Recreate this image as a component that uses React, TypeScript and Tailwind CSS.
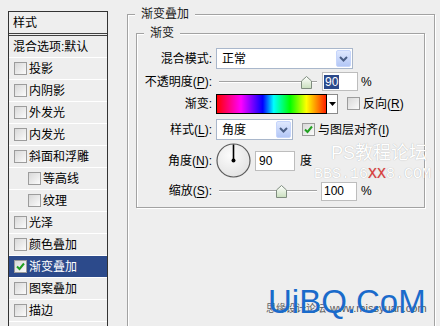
import type { ReactNode } from 'react'

// Photoshop "图层样式" dialog, 渐变叠加 page, Windows XP look.

type StyleRowT = { label: string; sub?: boolean; on?: boolean }

const STYLE_ROWS: StyleRowT[] = [
  { label: '投影' },
  { label: '内阴影' },
  { label: '外发光' },
  { label: '内发光' },
  { label: '斜面和浮雕' },
  { label: '等高线', sub: true },
  { label: '纹理', sub: true },
  { label: '光泽' },
  { label: '颜色叠加' },
  { label: '渐变叠加', on: true },
  { label: '图案叠加' },
  { label: '描边' },
]

function Checkbox({ on = false }: { on?: boolean }) {
  return (
    <span className="flex h-[13px] w-[13px] shrink-0 items-center justify-center border border-[#9c9c9c] bg-linear-to-br from-[#d8d8d8] to-[#fbfbfb]">
      {on && (
        <svg width="11" height="11" viewBox="0 0 11 11">
          <path d="M2 5.5 L4.5 8 L9 2.5" fill="none" stroke="#22a022" strokeWidth="2" />
        </svg>
      )}
    </span>
  )
}

function StyleList() {
  return (
    <div className="mt-[11px] ml-[8px] h-[330px] w-[100px] shrink-0 border border-[#333]">
      <div className="flex h-[24px] items-center border-b-[3px] border-double border-[#404040] pl-[4px]">样式</div>
      <div className="flex h-[22px] items-center border-b border-white pl-[4px]">混合选项:默认</div>
      {STYLE_ROWS.map((row) => (
        <div
          key={row.label}
          className={
            'flex h-[22px] items-center gap-[2px] border-b border-white ' +
            (row.sub ? 'pl-[19px] ' : 'pl-[5px] ') +
            (row.on ? 'bg-[#2c4a8b] text-white' : '')
          }
        >
          <Checkbox on={row.on} />
          <span>{row.label}</span>
        </div>
      ))}
      <div className="h-[22px] border-b border-white" />
    </div>
  )
}

function Legend({ children }: { children: ReactNode }) {
  return (
    <span className="absolute top-[-9px] left-[7px] bg-[#eeeeee] px-[6px] leading-[16px] text-[#1a1a1a]">
      {children}
    </span>
  )
}

function Row({ label, className, children }: { label: ReactNode; className: string; children: ReactNode }) {
  return (
    <div className={'flex items-center ' + className}>
      <span className="w-[75px] shrink-0 text-right">{label}</span>
      <div className="ml-[4px] flex items-center">{children}</div>
    </div>
  )
}

function Key({ k }: { k: string }) {
  return (
    <>
      (<span className="underline underline-offset-2">{k}</span>):
    </>
  )
}

function DropButton() {
  return (
    <span className="mr-[1px] ml-auto flex h-[17px] w-[15px] items-center justify-center rounded-[2px] border border-[#c6d5fb] bg-linear-to-b from-[#dfe8fe] to-[#b3c7f6]">
      <svg width="9" height="6" viewBox="0 0 9 6">
        <path d="M1 1 L4.5 4.5 L8 1" fill="none" stroke="#4b5f86" strokeWidth="2" />
      </svg>
    </span>
  )
}

function Select({ value, className }: { value: string; className: string }) {
  return (
    <div className={'flex h-[21px] items-center border border-[#a9b7cb] bg-white pl-[5px] ' + className}>
      <span>{value}</span>
      <DropButton />
    </div>
  )
}

function Slider({ pct, id }: { pct: number; id: string }) {
  return (
    <div className="relative ml-[3px] h-[14px] w-[98px]">
      <div className="absolute inset-x-0 top-[6px] h-[2px] border-t border-[#a3a3a3] bg-white" />
      <svg className="absolute top-[1px]" style={{ left: `${pct * 97 - 5.5}px` }} width="11" height="13" viewBox="0 0 11 13">
        <defs>
          <linearGradient id={id} x1="0" y1="0" x2="0" y2="1">
            <stop offset="0" stopColor="#ffffff" />
            <stop offset="1" stopColor="#c9dfbd" />
          </linearGradient>
        </defs>
        <path d="M0.5 5 L5.5 0.5 L10.5 5 V12.5 H0.5 Z" fill={`url(#${id})`} stroke="#7f8c7f" />
      </svg>
    </div>
  )
}

function Field({ className, children }: { className: string; children: ReactNode }) {
  return (
    <div className={'flex h-[19px] items-center border border-[#bdbdbd] bg-white ' + className}>{children}</div>
  )
}

function Dial() {
  return (
    <svg width="35" height="35" viewBox="0 0 35 35">
      <defs>
        <radialGradient id="dialFill" cx="0.4" cy="0.35" r="0.75">
          <stop offset="0" stopColor="#fcfcfc" />
          <stop offset="1" stopColor="#e0e0e0" />
        </radialGradient>
      </defs>
      <circle cx="17.5" cy="17.5" r="16.5" fill="url(#dialFill)" stroke="#5c5c5c" strokeWidth="1.2" />
      <line x1="17.5" y1="17.5" x2="17.5" y2="1.5" stroke="#000" strokeWidth="1.6" />
      <circle cx="17.5" cy="17.5" r="2" fill="#000" />
    </svg>
  )
}

export default function App() {
  const opacity = 90
  const scale = 100

  return (
    <div className="relative flex h-[326px] w-[440px] overflow-hidden bg-[#eeeeee] font-['Liberation_Sans','Noto_Sans_CJK_SC',sans-serif] text-[12px] text-black">
      <StyleList />

      <div className="relative mt-[14px] ml-[19px] h-[330px] w-[308px] shrink-0 border border-[#a2a2a2] shadow-[inset_1px_1px_0_#fff,1px_1px_0_#fff]">
        <Legend>渐变叠加</Legend>

        <div className="relative mt-[18px] ml-[8px] h-[175px] w-[289px] border border-[#a2a2a2] shadow-[inset_1px_1px_0_#fff,1px_1px_0_#fff]">
          <Legend>渐变</Legend>

          <div className="flex flex-col pt-[14px]">
            <Row label="混合模式:" className="h-[21px]">
              <Select value="正常" className="w-[137px]" />
            </Row>

            <Row label={<>不透明度<Key k="P" /></>} className="mt-[2px] h-[21px]">
              <Slider pct={opacity / 100} id="thumbOpacity" />
              <Field className="ml-[5px] w-[36px] pl-[1px]">
                <span className="bg-[#2c4a8b] px-[1px] leading-[14px] text-white">{opacity}</span>
              </Field>
              <span className="ml-[3px]">%</span>
            </Row>

            <Row label="渐变:" className="mt-[1px] h-[21px]">
              <div className="flex h-[20px]">
                <div className="w-[111px] border border-black bg-[linear-gradient(to_right,#f00_0%,#f0f_22%,#00f_42%,#0ff_52%,#0f0_67%,#ff0_82%,#f20_100%)]" />
                <div className="flex w-[11px] items-center justify-center border border-l-0 border-[#8a8a8a] bg-white">
                  <svg width="7" height="4" viewBox="0 0 7 4">
                    <path d="M0 0 H7 L3.5 4 Z" fill="#000" />
                  </svg>
                </div>
              </div>
              <span className="ml-[9px]">
                <Checkbox />
              </span>
              <span className="ml-[3px]">
                反向(<span className="underline underline-offset-2">R</span>)
              </span>
            </Row>

            <Row label={<>样式<Key k="L" /></>} className="mt-[5px] h-[21px]">
              <Select value="角度" className="w-[77px]" />
              <span className="ml-[9px]">
                <Checkbox on />
              </span>
              <span className="ml-[3px]">
                与图层对齐(<span className="underline underline-offset-2">I</span>)
              </span>
            </Row>

            <Row label={<>角度<Key k="N" /></>} className="mt-[3px] h-[35px]">
              <Dial />
              <Field className="ml-[4px] h-[20px] w-[40px] pl-[3px]">
                <span>90</span>
              </Field>
              <span className="ml-[5px]">度</span>
            </Row>

            <Row label={<>缩放<Key k="S" /></>} className="mt-[3px] h-[20px]">
              <Slider pct={(scale - 10) / 140} id="thumbScale" />
              <Field className="ml-[4px] w-[36px] pl-[2px]">
                <span>{scale}</span>
              </Field>
              <span className="ml-[4px]">%</span>
            </Row>
          </div>
        </div>
      </div>

      {/* Forum watermarks stamped over the screenshot */}
      <div className="pointer-events-none absolute top-[143px] left-[331px] text-[18px] leading-[20px] text-white [text-shadow:0_0_1px_rgba(0,0,0,0.3)]">
        PS教程论坛
      </div>
      <div className="pointer-events-none absolute top-[165px] left-[314px] font-['Liberation_Mono',monospace] text-[15px] leading-[20px] text-white [text-shadow:0_0_1px_rgba(0,0,0,0.3)]">
        BBS.16<span className="text-[#e23a3a]">XX</span>8.COM
      </div>
      <div className="pointer-events-none absolute top-[302px] left-[266px] flex items-baseline gap-[4px] leading-[12px] text-[#5a5a5a]">
        <span className="text-[10px]">思缘设计论坛</span>
        <span className="text-[11px]">www.missyuan.com</span>
      </div>
      <div className="pointer-events-none absolute top-[285px] left-[268px] text-[33px] leading-[33px] text-[#1a6bcb]">
        UiBQ.CoM
      </div>
    </div>
  )
}
